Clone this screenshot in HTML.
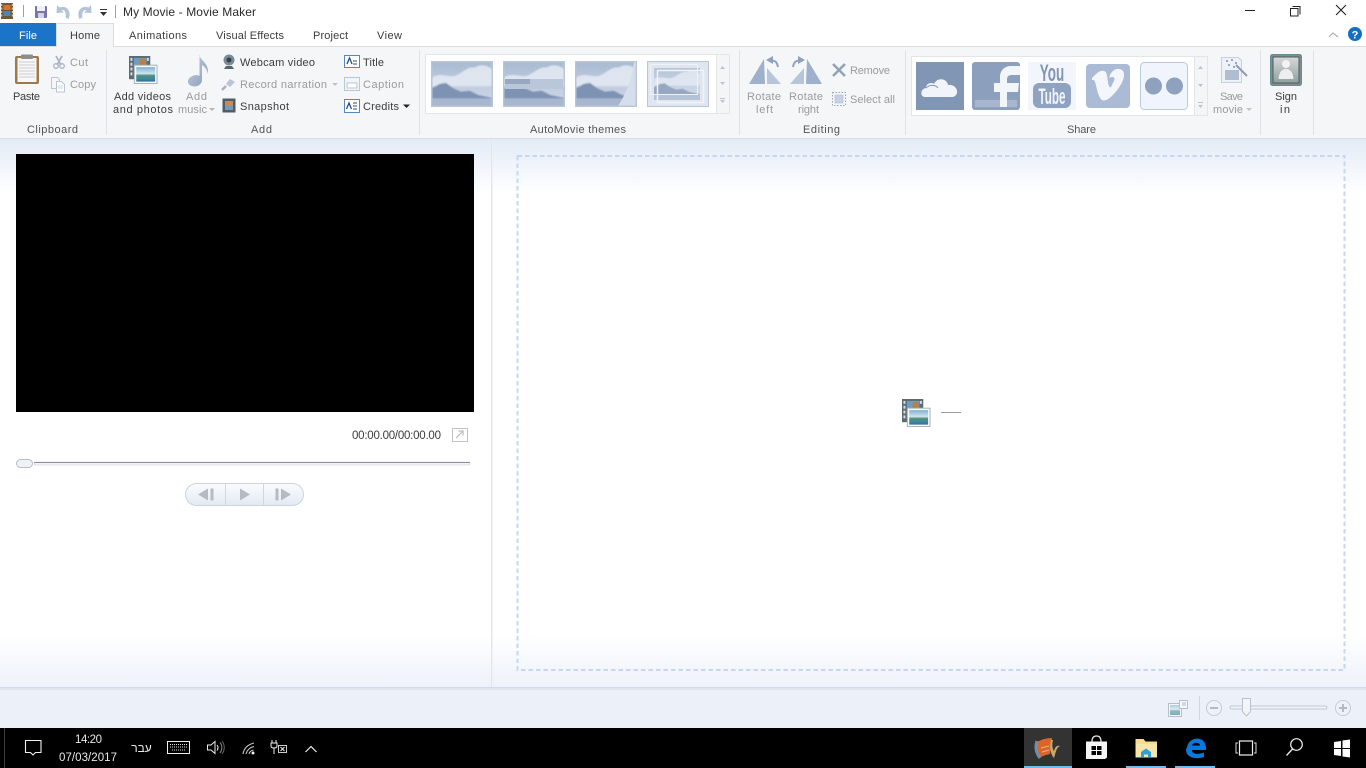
<!DOCTYPE html>
<html><head><meta charset="utf-8"><title>My Movie - Movie Maker</title>
<style>
html,body{margin:0;padding:0;background:#fff;width:1366px;height:768px;overflow:hidden}
svg{position:absolute;left:0;top:0;display:block}
text{font-family:"Liberation Sans","Noto Sans CJK JP",sans-serif;font-size:11px;fill:#3c3c3c}
.d{fill:#9b9b9b}
.c{text-anchor:middle}
.w{fill:#e8e8e8}
</style></head><body>
<svg width="1366" height="768" viewBox="0 0 1366 768" xmlns="http://www.w3.org/2000/svg">
<defs>
<filter id="soft" x="-5%" y="-5%" width="110%" height="110%"><feGaussianBlur stdDeviation="0.7"/></filter>
<filter id="soft2" x="-5%" y="-5%" width="110%" height="110%"><feGaussianBlur stdDeviation="0.35"/></filter>
<linearGradient id="top" x1="0" y1="0" x2="0" y2="1"><stop offset="0" stop-color="#e3ebf7"/><stop offset="1" stop-color="#ffffff"/></linearGradient>
<linearGradient id="bot" x1="0" y1="0" x2="0" y2="1"><stop offset="0" stop-color="#ffffff"/><stop offset="1" stop-color="#edf2fa"/></linearGradient>
<linearGradient id="sky" x1="0" y1="0" x2="0" y2="1"><stop offset="0" stop-color="#a9bad2"/><stop offset="1" stop-color="#d2dbe9"/></linearGradient>
<linearGradient id="pill" x1="0" y1="0" x2="0" y2="1"><stop offset="0" stop-color="#fbfcfe"/><stop offset="1" stop-color="#e3e9f3"/></linearGradient>
<linearGradient id="ph" x1="0" y1="0" x2="0" y2="1"><stop offset="0" stop-color="#7fb0d4"/><stop offset=".45" stop-color="#cfe6ef"/><stop offset=".58" stop-color="#4f8f7c"/><stop offset=".78" stop-color="#3f8a9a"/><stop offset="1" stop-color="#356f9e"/></linearGradient>
<linearGradient id="note" x1="0" y1="0" x2="1" y2="1"><stop offset="0" stop-color="#c3cfe0"/><stop offset="1" stop-color="#8c9dba"/></linearGradient>
<linearGradient id="signb" x1="0" y1="0" x2="0" y2="1"><stop offset="0" stop-color="#d8d8d8"/><stop offset="1" stop-color="#8fa09f"/></linearGradient>
<symbol id="land" viewBox="0 0 56 40" preserveAspectRatio="none">
<rect width="56" height="40" fill="url(#sky)"/>
<g filter="url(#soft)">
<path d="M0 14C6 10 14 13 20 13C28 11 32 4 40 5C46 1 54 4 58 8V22H0Z" fill="#e6ebf3" opacity=".85"/>
<path d="M-2 25L7 20L13 19L20 24L27 27L35 26L43 30L58 33V41H-2Z" fill="#7e92b3"/>
<rect x="-2" y="33" width="60" height="8" fill="#a8b7ce"/>
</g>
</symbol>
<symbol id="film" viewBox="0 0 30 30">
<rect x="0" y="0" width="22" height="24" fill="#5b6b74"/>
<rect x="5" y="2" width="13" height="9" fill="#6f9cc4"/>
<rect x="11" y="3" width="6" height="8" fill="#b9803f"/>
<g fill="#d8dee2"><rect x="1.500" y="2" width="2" height="3"/><rect x="1.500" y="7" width="2" height="3"/><rect x="1.500" y="12" width="2" height="3"/><rect x="1.500" y="17" width="2" height="3"/><rect x="18.500" y="2" width="2" height="3"/></g>
<rect x="5.500" y="9.500" width="23.500" height="19" fill="#f8f9fa" stroke="#a4afb6"/>
<rect x="7.500" y="11.500" width="19.500" height="15" fill="url(#ph)"/>
</symbol>
</defs>

<!-- title bar and ribbon -->
<rect width="1366" height="46" fill="#fff"/>
<rect y="46" width="1366" height="92" fill="#f5f6f7"/>
<rect y="46" width="1366" height="1" fill="#dcdddf"/>
<rect y="138" width="1366" height="1" fill="#d7dde5"/>
<rect x="0" y="23" width="56" height="23" fill="#1a74c7"/>
<path d="M56.500 47V23.500H113.500V47" fill="#f5f6f7" stroke="#dcdddf"/>
<rect x="57" y="45" width="56" height="3" fill="#f5f6f7"/>

<!-- QAT -->
<rect x="1" y="3" width="12" height="16" fill="#6b5a3a"/>
<rect x="3.500" y="5" width="7" height="5" fill="#d9722a"/><rect x="3.500" y="11" width="7" height="5" fill="#4f86b5"/>
<path d="M1.500 4v14M12.500 4v14" stroke="#d8c88a" stroke-width="1.500" stroke-dasharray="2 1.500"/>
<rect x="23" y="5" width="1" height="12" fill="#a0a0a0"/>
<rect x="35" y="6" width="12" height="12" rx="1" fill="#7a72a8"/><rect x="37" y="6" width="8" height="5" fill="#eef0f7"/><rect x="38" y="13" width="6" height="5" fill="#d3d3e2"/>
<path d="M57 5L56.500 13L64 12.500L61.500 10C64.500 9.500 66.500 12 65.500 17.500L68.500 19C72 12 67 4.500 59.500 7.500Z" fill="#b5c3d8"/>
<path d="M91 5L91.500 13L84 12.500L86.500 10C83.500 9.500 81.500 12 82.500 17.500L79.500 19C76 12 81 4.500 88.500 7.500Z" fill="#b5c3d8"/>
<rect x="100" y="9" width="7" height="1" fill="#333"/><path d="M100 12h7l-3.500 4z" fill="#333"/>
<rect x="115" y="5" width="1" height="13" fill="#a0a0a0"/>
<text x="123" y="16" textLength="133" style="font-size:12px;fill:#2a2a2a">My Movie - Movie Maker</text>

<!-- window buttons -->
<rect x="1245" y="10" width="10" height="1" fill="#222"/>
<path d="M1292.500 6.500h7.500v8" fill="none" stroke="#222"/><rect x="1290.500" y="8.500" width="7.500" height="7.500" fill="#fff" stroke="#222"/>
<path d="M1336 5L1346 15M1346 5L1336 15" stroke="#222" stroke-width="1.100"/>
<path d="M1329 37L1333 33L1338 37" fill="none" stroke="#b0b0b0" stroke-width="1.200"/>
<circle cx="1355" cy="34" r="7" fill="#1270c4"/>
<text x="1355" y="38.500" class="c" style="font-size:11px;font-weight:bold;fill:#fff">?</text>

<!-- tabs -->
<text x="19" y="39" textLength="18" style="fill:#fff">File</text>
<text x="70" y="39" textLength="30">Home</text>
<text x="129" y="39" textLength="58">Animations</text>
<text x="216" y="39" textLength="68">Visual Effects</text>
<text x="313" y="39" textLength="35">Project</text>
<text x="377" y="39" textLength="25">View</text>

<!-- group separators -->
<g fill="#e0e2e5"><rect x="106" y="50" width="1" height="85"/><rect x="419" y="50" width="1" height="85"/><rect x="739" y="50" width="1" height="85"/><rect x="905" y="50" width="1" height="85"/><rect x="1260" y="50" width="1" height="85"/><rect x="1313" y="50" width="1" height="85"/></g>

<!-- Clipboard -->
<rect x="15" y="56" width="24" height="28" rx="2" fill="#9c7a4e"/>
<rect x="17.500" y="58" width="19" height="24" fill="#f7f7f5"/>
<path d="M19 62h16M19 65h16M19 68h16M19 71h16M19 74h16M19 77h16" stroke="#c9ccd2"/>
<rect x="21" y="54.500" width="12" height="4.500" rx="1" fill="#8e8e88"/>
<text x="13" y="100" textLength="27">Paste</text>
<path d="M56 56L61 65M62 56L57 65" stroke="#a8b3c6" stroke-width="1.800"/><circle cx="56" cy="66" r="2.300" fill="none" stroke="#a8b3c6" stroke-width="1.300"/><circle cx="62" cy="66" r="2.300" fill="none" stroke="#a8b3c6" stroke-width="1.300"/>
<text x="70" y="66" class="d" textLength="18">Cut</text>
<path d="M51.500 77.500h6l2 2v9h-8z" fill="#f4f6f9" stroke="#bcc6d5"/><path d="M56.500 81.500h5l3 3v7.500h-8z" fill="#fff" stroke="#bcc6d5"/><path d="M58 86h5M58 88h5" stroke="#cdd4df"/>
<text x="70" y="88" class="d" textLength="26">Copy</text>
<text x="27" y="133" textLength="51" style="fill:#555">Clipboard</text>

<!-- Add -->
<use href="#film" x="129" y="56" width="29" height="29"/>
<text x="114" y="100" textLength="57">Add videos</text>
<text x="113" y="113" textLength="60">and photos</text>
<path d="M199 55C201 61 209 63 208 74C207 69 204 66 202 65V80C202 85 196 87.500 192 86C187.500 85 186.500 80.500 190 77.500C193 75 197 74.500 199.500 76V55Z" fill="url(#note)"/>
<text x="186" y="100" class="d" textLength="21">Add</text>
<text x="178" y="113" class="d" textLength="29">music</text>
<path d="M209 108h6l-3 3z" fill="#b5b5b5"/>
<circle cx="229" cy="60" r="5.500" fill="#7a8a94"/><circle cx="229" cy="60" r="2.500" fill="#33414c"/><path d="M224 69h10l-2-3h-6z" fill="#56646e"/>
<text x="240" y="66" textLength="75">Webcam video</text>
<path d="M222 90L226 86" stroke="#a7b2c4" stroke-width="2.500"/><path d="M226 84L230 79L235 82L230 87Z" fill="#b9c4d6"/>
<text x="240" y="88" class="d" textLength="87">Record narration</text>
<path d="M332 83h6l-3 3z" fill="#c3c3c3"/>
<rect x="222.500" y="98.500" width="13" height="14" fill="#4e5d68"/><rect x="225" y="101" width="8" height="9" fill="#c98a5a"/><rect x="225" y="106" width="8" height="4" fill="#6b9dbf"/>
<text x="240" y="110" textLength="49">Snapshot</text>
<rect x="344.500" y="55.500" width="15" height="12" fill="#fff" stroke="#4f8ac4"/><path d="M347 64L349.500 58L352 64" fill="none" stroke="#24507f" stroke-width="1.300"/><path d="M353 61h4M353 64h4" stroke="#24507f"/>
<text x="363" y="66" textLength="21">Title</text>
<rect x="344.500" y="77.500" width="15" height="13" fill="#f2f5f9" stroke="#b8c6d8"/><rect x="347" y="83" width="10" height="5" fill="#fff" stroke="#bcc5d2"/>
<text x="363" y="88" class="d" textLength="41">Caption</text>
<rect x="344.500" y="99.500" width="15" height="13" fill="#fff" stroke="#4f8ac4"/><path d="M346.500 109L349 103L351.500 109" fill="none" stroke="#24507f" stroke-width="1.300"/><path d="M353 103h4M353 106h4M353 109h4" stroke="#24507f"/>
<text x="363" y="110" textLength="36">Credits</text>
<path d="M403 104.500h7l-3.500 3.500z" fill="#222"/>
<text x="251" y="133" textLength="21" style="fill:#555">Add</text>

<!-- Themes -->
<rect x="425.500" y="54.500" width="291" height="59" fill="#fff" stroke="#e3e5e8"/>
<rect x="716.500" y="54.500" width="13" height="59" fill="#f4f5f6" stroke="#e3e5e8"/>
<g>
<use href="#land" x="432" y="62" width="60" height="44"/><rect x="431.750" y="61.750" width="60.500" height="44.500" fill="none" stroke="#b9c6d8" stroke-width="1.500"/>
<use href="#land" x="504" y="62" width="60" height="44"/><rect x="505" y="79" width="58" height="10" fill="#bac6d9"/><rect x="505" y="79" width="25" height="5" fill="#98a8c0"/><rect x="503.750" y="61.750" width="60.500" height="44.500" fill="none" stroke="#b9c6d8" stroke-width="1.500"/>
<use href="#land" x="576" y="62" width="60" height="44"/><path d="M636 62V106H618C626 94 632 78 634 62Z" fill="#d6deea"/><rect x="575.750" y="61.750" width="60.500" height="44.500" fill="none" stroke="#b9c6d8" stroke-width="1.500"/>
<rect x="647.500" y="61.500" width="61" height="45" fill="#dfe6f0" stroke="#b9c6d8"/><use href="#land" x="654" y="68" width="46" height="32" opacity=".75"/><rect x="650.500" y="64.500" width="47" height="30" fill="none" stroke="#eef2f8"/><rect x="657.500" y="70.500" width="46" height="32" fill="none" stroke="#f0f3f8" stroke-width="1.500"/>
</g>
<path d="M720 69h5l-2.500-3zM720 82h5l-2.500 3zM720 100h5l-2.500 3z" fill="#bfc3c9"/><rect x="720" y="98" width="5" height="1" fill="#bfc3c9"/>
<text x="530" y="133" textLength="96" style="fill:#555">AutoMovie themes</text>

<!-- Editing -->
<path d="M764 59L765 84H749Z" fill="#9eb0cb"/><path d="M767 84V68L781 84Z" fill="#b7c5da"/><path d="M771 61C775 60 777 62 778 67" fill="none" stroke="#8fa1bd" stroke-width="2"/><path d="M766 60L773 56V64Z" fill="#8fa1bd"/>
<path d="M807 59L806 84H822Z" fill="#9eb0cb"/><path d="M804 84V68L790 84Z" fill="#b7c5da"/><path d="M800 61C796 60 794 62 793 67" fill="none" stroke="#8fa1bd" stroke-width="2"/><path d="M805 60L798 56V64Z" fill="#8fa1bd"/>
<text x="747" y="100" class="d" textLength="34">Rotate</text>
<text x="756" y="113" class="d" textLength="17">left</text>
<text x="789" y="100" class="d" textLength="34">Rotate</text>
<text x="798" y="113" class="d" textLength="21">right</text>
<path d="M833 64L845 76M845 64L833 76" stroke="#93a2b9" stroke-width="2.500"/>
<text x="850" y="74" class="d" textLength="40">Remove</text>
<rect x="832.500" y="92.500" width="13" height="13" fill="none" stroke="#9aa8bd" stroke-dasharray="1.500 1.500"/><rect x="835" y="95" width="8" height="8" fill="#c7d3e5" stroke="#aebcd0" stroke-width=".6"/>
<text x="850" y="103" class="d" textLength="45">Select all</text>
<text x="803" y="133" textLength="37" style="fill:#555">Editing</text>

<!-- Share -->
<rect x="911.500" y="56.500" width="283" height="59" fill="#fff" stroke="#e3e5e8"/>
<rect x="1194.500" y="56.500" width="13" height="59" fill="#f4f5f6" stroke="#e3e5e8"/>
<rect x="916" y="62" width="48" height="48" fill="#8195b5"/>
<path d="M925 97C920 97 920 89 926 88C926 83 932 82 934 84C937 77 947 78 948 85C953 84 958 88 957 93C956 96 954 97 952 97Z" fill="#f1f4f9"/>
<path d="M926 88C930 84 936 85 938 88" fill="none" stroke="#8195b5" stroke-width="1"/>
<rect x="972" y="62" width="48" height="48" rx="3" fill="#8c9fbd"/>
<rect x="975" y="100" width="42" height="7" fill="#a9b7ce"/>
<path d="M1000 107V92H994V83H1000V77C1000 70 1005 66 1011 66H1020V75H1012C1008 75 1007 77 1007 80V83H1019L1018 92H1007V107Z" fill="#f2f5f9"/>
<rect x="1028" y="62" width="48" height="48" fill="#f2f6fc"/>
<text transform="translate(1052 81) scale(.56 1)" class="c" style="font-size:24px;font-weight:bold;fill:#8095b6">You</text>
<rect x="1033" y="83" width="38" height="25" rx="6" fill="#8fa2c0"/>
<text transform="translate(1052 104) scale(.53 1)" class="c" style="font-size:22px;font-weight:bold;fill:#f2f6fc">Tube</text>
<rect x="1086" y="64" width="44" height="44" rx="4" fill="#abbbd6"/>
<path d="M1092 78C1097 73 1100 70 1104 71C1108 72 1107 80 1109 86C1111 90 1112 84 1114 81C1116 77 1112 76 1109 78C1111 70 1117 67 1122 70C1126 73 1124 81 1118 89C1112 97 1106 102 1102 100C1098 97 1097 88 1095 82C1094 79 1093 80 1092 80Z" fill="#f3f6fb"/>
<rect x="1140.500" y="62.500" width="47" height="47" rx="4" fill="#f0f5fd" stroke="#b9c9e0"/>
<circle cx="1153.500" cy="86" r="8.500" fill="#8ea1bf"/><circle cx="1174.500" cy="86" r="8.500" fill="#8ea1bf"/>
<path d="M1198 69h5l-2.500-3zM1198 84h5l-2.500 3zM1198 105h5l-2.500 3z" fill="#bfc3c9"/><rect x="1198" y="102" width="5" height="1" fill="#bfc3c9"/>
<path d="M1221.500 57.500h17l3 3v22h-20z" fill="#eef2f8" stroke="#c6d0df"/>
<rect x="1225" y="70" width="14" height="10" fill="#b0bdd1"/>
<g fill="#9aaac2"><rect x="1226" y="60" width="2" height="2"/><rect x="1231" y="59" width="2" height="2"/><rect x="1235" y="62" width="2" height="2"/><rect x="1228" y="64" width="2" height="2"/><rect x="1233" y="66" width="2" height="2"/></g>
<path d="M1236 65L1247 76" stroke="#8e9db5" stroke-width="2"/>
<text x="1220" y="100" class="d" textLength="23">Save</text>
<text x="1213" y="113" class="d" textLength="30">movie</text>
<path d="M1246 108h6l-3 3z" fill="#c3c3c3"/>
<rect x="1270.500" y="54.500" width="31" height="31" rx="2" fill="#7f8f8f" stroke="#5f8f93"/>
<rect x="1273" y="57" width="26" height="26" fill="url(#signb)" stroke="#4f5b5b"/>
<circle cx="1286" cy="64" r="4" fill="#f3f3f3"/><path d="M1278.500 79C1279 72 1282 69 1286 69C1290 69 1293 72 1293.500 79Z" fill="#eeeeee"/>
<text x="1275" y="100" textLength="22">Sign</text>
<text x="1280" y="113" textLength="10">in</text>
<text x="1067" y="133" textLength="29" style="fill:#555">Share</text>

<!-- Content -->
<rect y="139" width="1366" height="55" fill="url(#top)"/>
<rect y="194" width="1366" height="440" fill="#fff"/>
<rect y="634" width="1366" height="54" fill="url(#bot)"/>
<rect x="491" y="139" width="1" height="549" fill="#e3e6eb"/>
<rect x="492" y="139" width="1" height="549" fill="#eceef1" opacity=".7"/>
<rect x="16" y="154" width="458" height="258" fill="#000"/>
<text x="352" y="439" textLength="89" style="font-size:11.500px">00:00.00/00:00.00</text>
<rect x="452.500" y="428.500" width="15" height="13" fill="#fff" stroke="#c3c3c3"/>
<path d="M456 438L463 431M458.500 431h4.500v4.500" fill="none" stroke="#bcbcbc" stroke-width="1.200"/>
<rect x="34" y="462" width="436" height="3" rx="1.500" fill="#f1f2f5" stroke="#c9cdd6" stroke-width=".6"/>
<rect x="34" y="462" width="436" height="1" fill="#8f8f9f"/>
<rect x="16.500" y="459.500" width="16" height="8" rx="4" fill="#eef1f5" stroke="#b7bcc5"/>
<rect x="185.500" y="483.500" width="118" height="22" rx="11" fill="url(#pill)" stroke="#ccd3dd"/>
<path d="M225.500 484v21M263.500 484v21" stroke="#d1d7e0"/>
<path d="M198 494.500L208 488.500V500.500Z" fill="#b6bac2"/><rect x="210.500" y="488.500" width="3" height="12" fill="#b6bac2"/>
<path d="M240 488.500L250 494.500L240 500.500Z" fill="#b6bac2"/>
<rect x="275.500" y="488.500" width="3" height="12" fill="#b6bac2"/><path d="M281 488.500L291 494.500L281 500.500Z" fill="#b6bac2"/>
<rect x="517.500" y="156" width="827" height="514" fill="none" stroke="#c5d8ef" stroke-width="2" stroke-dasharray="4.500 3"/>
<use href="#film" x="902" y="399" width="29" height="29"/>
<rect x="941" y="412" width="20" height="1" fill="#9a9a9a"/>

<!-- status bar -->
<rect y="688" width="1366" height="40" fill="#ebf0f9"/>
<rect y="687" width="1366" height="1" fill="#d3dbe7"/>
<rect y="688" width="1366" height="2" fill="#dfe6f0"/>
<rect x="1168.500" y="703.500" width="13" height="13" fill="#f5f7fa" stroke="#b5bfcc"/><rect x="1170" y="705" width="10" height="10" fill="url(#ph)" opacity=".6"/>
<rect x="1179.500" y="700.500" width="8" height="8" fill="#f6f8fb" stroke="#b5bfcc"/><path d="M1182 703h4M1182 705h4" stroke="#a9b6c8"/>
<rect x="1199" y="696" width="1" height="24" fill="#cfd6e1"/>
<circle cx="1214" cy="708" r="7.500" fill="#eef2f8" stroke="#c5ccd8"/><rect x="1210" y="707" width="8" height="2" fill="#b3bac6"/>
<rect x="1230" y="706" width="97" height="3" rx="1.500" fill="#f0f2f6" stroke="#b5bccb" stroke-width=".7"/>
<path d="M1242.500 698.500h8v13l-4 4.500l-4-4.500z" fill="#f4f5f8" stroke="#bcc2cd"/>
<circle cx="1343" cy="708" r="7.500" fill="#eef2f8" stroke="#c5ccd8"/><path d="M1339 708h8M1343 704v8" stroke="#b3bac6" stroke-width="2"/>

<!-- taskbar -->
<rect y="728" width="1366" height="40" fill="#000"/>
<rect x="4" y="728" width="1" height="40" fill="#3a3a3a"/>
<path d="M25.500 740.500h15.500v12h-5.500l-2.500 2.500l-2.500-2.500h-5z" fill="none" stroke="#f0f0f0" stroke-width="1.100"/>
<text x="75" y="743" class="w" textLength="27" style="font-size:11.500px">14:20</text>
<text x="59" y="761" class="w" textLength="58" style="font-size:11.500px">07/03/2017</text>
<text x="141.500" y="752" class="c w" style="font-size:12px" direction="rtl">עבר</text>
<rect x="167.500" y="741.500" width="22" height="12" fill="none" stroke="#eee"/>
<path d="M170 744.500h17M170 747h17M172 750h13" stroke="#ddd" stroke-dasharray="1 1"/>
<path d="M207.500 745h3.500l4-3.500v12l-4-3.500h-3.500z" fill="none" stroke="#eee"/>
<path d="M217 745c1.500 2 1.500 3.500 0 5.500" fill="none" stroke="#eee"/><path d="M220 742.500c2.500 3 2.500 7 0 10.500" fill="none" stroke="#888"/><path d="M222 741c3 4 3 9 0 13" fill="none" stroke="#666"/>
<path d="M243 754c1-6 5-9.500 11-11M246 754c1-4 3.500-6.500 8-7.500M249 754c.5-2 2-3.500 4.500-4" fill="none" stroke="#c8c8c8" stroke-width="1.100"/><circle cx="253" cy="753" r="1.500" fill="#eee"/>
<path d="M272 743v-3M276 743v-3M271 743h6v3c0 1.500-1 2-3 2s-3-.5-3-2zM274 748v6" fill="none" stroke="#eee"/>
<rect x="278.500" y="745.500" width="8" height="7" fill="none" stroke="#ccc"/><path d="M280.500 747l4 4M284.500 747l-4 4" stroke="#eee"/>
<path d="M305.500 752L311 746.500L316.500 752" fill="none" stroke="#eee" stroke-width="1.200"/>
<rect x="1024" y="728" width="48" height="40" fill="#333"/>
<rect x="1024" y="766" width="48" height="2" fill="#76b9ed"/>
<rect x="1126" y="766" width="40" height="2" fill="#76b9ed"/>
<rect x="1175" y="766" width="40" height="2" fill="#76b9ed"/>
<g filter="url(#soft2)"><path d="M1037 742C1042 739 1048 738 1052 738L1050 754C1046 755 1042 756 1040 758C1037 754 1036 748 1037 742Z" fill="#d9652a"/><path d="M1037 741C1035 747 1036 753 1040 758" fill="none" stroke="#6f8fae" stroke-width="3"/><path d="M1041 748l8-2M1042 752l7-2" stroke="#f0b080"/><path d="M1051 740C1049 748 1051 755 1054 758C1056 752 1056 748 1060 746C1056 745 1055 748 1054 751C1052 748 1052 744 1053 740Z" fill="#c9a86a"/></g>
<path d="M1086 741.500h21v16l-2 1.500h-19z" fill="#f5f5f5"/><path d="M1092 741.500C1092 737 1094 736 1096.500 736C1099 736 1101 737 1101 741.500" fill="none" stroke="#eee" stroke-width="1.200"/>
<g fill="#000"><rect x="1091.500" y="746" width="4.500" height="4"/><rect x="1097" y="746" width="4.500" height="4"/><rect x="1091.500" y="751" width="4.500" height="4"/><rect x="1097" y="751" width="4.500" height="4"/></g>
<path d="M1135.500 739h8l2 2.500h11.500v16h-21.500z" fill="#f5dc8e"/>
<rect x="1135.500" y="744" width="21.500" height="13" fill="#f7e6a8"/>
<path d="M1141 757v-5l5-3.500l5 3.500v5h-3v-2.500h-4v2.500z" fill="#2f9fd8"/>
<path d="M1187 747.500C1188 740 1196 737 1201 739.500C1205 741 1206 745 1206 750H1192C1192 754 1197 755 1204 752.500V757C1195 760 1186 757 1186 750C1186 749 1186.500 748 1187 747.500ZM1192 745.500H1200C1200 742 1193 742 1192 745.500Z" fill="#0a78d7" fill-rule="evenodd"/>
<rect x="1239.500" y="741" width="13" height="14" fill="none" stroke="#eee" stroke-width="1.200"/><path d="M1238 743h-2v10h2M1254 743h2v10h-2" fill="none" stroke="#ddd"/>
<circle cx="1296.500" cy="744.500" r="5.800" fill="none" stroke="#eee" stroke-width="1.200"/><path d="M1292.500 749L1286.500 755.500" stroke="#eee" stroke-width="1.300"/>
<path d="M1334 742l7-1v7h-7zM1342.500 740.500l7.500-1v8.500h-7.500zM1334 749h7v7l-7-1zM1342.500 749h7.500v8.500l-7.500-1z" fill="#fff"/>
</svg>
</body></html>
